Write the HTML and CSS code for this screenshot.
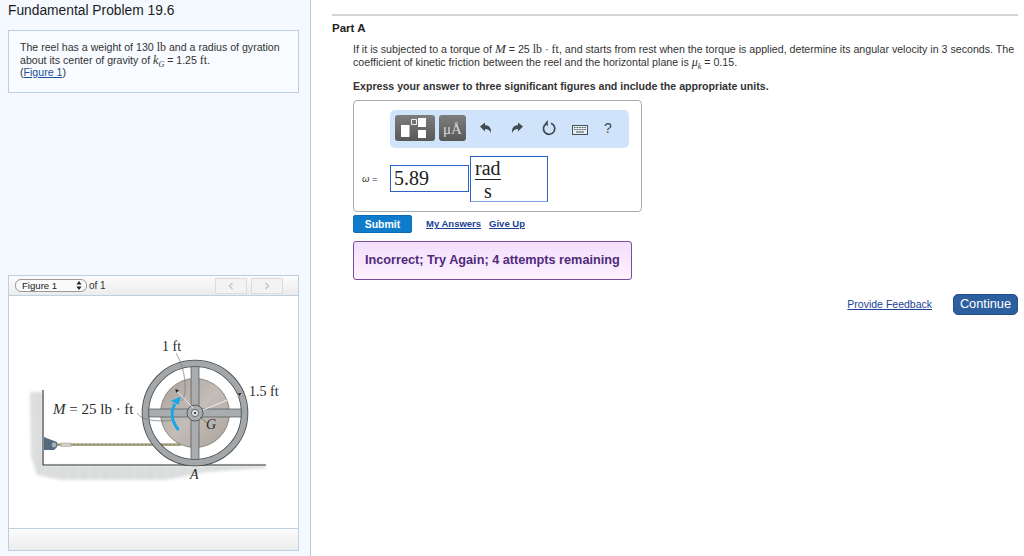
FILE: index.html
```html
<!DOCTYPE html>
<html lang="en">
<head>
<meta charset="utf-8">
<title>Fundamental Problem 19.6</title>
<link rel="stylesheet" href="styles.css">
</head>
<body>
<div class="page">
  <aside class="side">
    <h1 class="title">Fundamental Problem 19.6</h1>
    <section class="problem">
      <div>The reel has a weight of 130 <span class="m">lb</span> and a radius of gyration</div>
      <div>about its center of gravity of <span class="mi">k<sub>G</sub></span> = 1.25 <span class="m">ft</span>.</div>
      <div>(<a class="lnk" href="#">Figure 1</a>)</div>
    </section>
    <section class="figure">
      <div class="figbar">
        <div class="select"><span>Figure 1</span><svg class="updown" width="6" height="9" viewBox="0 0 6 9"><path d="M3 0l2.600 3.400H.4zM3 9L.4 5.600h5.200z" fill="#222"/></svg></div>
        <span class="of">of 1</span>
        <div class="pager">
          <div class="pg"><svg width="6" height="8" viewBox="0 0 6 8"><path d="M4.500 1L1.500 4l3 3" fill="none" stroke="#c4c4c4" stroke-width="1.400"/></svg></div>
          <div class="pg"><svg width="6" height="8" viewBox="0 0 6 8"><path d="M1.500 1l3 3-3 3" fill="none" stroke="#c4c4c4" stroke-width="1.400"/></svg></div>
        </div>
      </div>
      <div class="figpane">
        <svg class="diagram" width="288" height="232" viewBox="10 296 288 232">
          <defs>
            <filter id="soft" x="-10%" y="-10%" width="120%" height="120%"><feGaussianBlur stdDeviation="1.500"/></filter>
            <filter id="fine" x="-5%" y="-5%" width="110%" height="110%"><feGaussianBlur stdDeviation=".35"/></filter>
            <linearGradient id="drum" x1="0" y1="0" x2="1" y2="1"><stop offset="0" stop-color="#aaa29c"/><stop offset=".5" stop-color="#c4bdb7"/><stop offset="1" stop-color="#aba39c"/></linearGradient>
            <pattern id="speck" width="11" height="9" patternUnits="userSpaceOnUse"><rect width="11" height="9" fill="#dcdddd"/><circle cx="2" cy="2" r=".7" fill="#f4f4f4"/><circle cx="7" cy="5" r=".6" fill="#bcbdbe"/><circle cx="4" cy="7" r=".6" fill="#f0f0f0"/><circle cx="9.500" cy="1.500" r=".5" fill="#c2c3c4"/></pattern>
          </defs>
          <path d="M31 392h13v73h223v3l-60 4-40 8H62l-24-5-6-18z" fill="url(#speck)" filter="url(#soft)"/>
          <path d="M44 390v75h223" fill="none" stroke="#33383c" stroke-width="1.100"/>
          <g filter="url(#fine)">
            <path d="M45 437l5 2 8 3v5l-3 3h-10z" fill="#566a7d"/>
            <circle cx="55" cy="445" r="2.400" fill="#a4b0bb"/>
            <path d="M58 444.600H182" stroke="#aaa888" stroke-width="2.600"/>
            <path d="M58 444.600H182" stroke="#6f6e55" stroke-width=".6" stroke-dasharray="2 2"/>
            <rect x="62" y="443" width="10" height="3.400" fill="#d3cfc3" stroke="#888" stroke-width=".4"/>
            <circle cx="196" cy="413" r="34.500" fill="url(#drum)" stroke="#7a736d" stroke-width=".8"/>
            <path d="M192 362h8v102h-8zM146 409h100v8H146z" fill="#a9adaf" stroke="#4d5154" stroke-width=".7"/>
            <circle cx="196" cy="413" r="49.600" fill="none" stroke="#44484a" stroke-width="7.400"/>
            <circle cx="196" cy="413" r="49.600" fill="none" stroke="#a3a7a9" stroke-width="5.800"/>
            <circle cx="196" cy="413" r="8" fill="#a8acae" stroke="#44484a" stroke-width=".8"/>
            <circle cx="196" cy="413" r="3.600" fill="#dfe1e1" stroke="#44484a" stroke-width=".7"/>
            <circle cx="196" cy="413" r="1.100" fill="#222"/>
            <path d="M177 353c7 12 10 26 9 40l-3 8" fill="none" stroke="#77797a" stroke-width=".7"/>
            <path d="M176 389l18 19" stroke="#f2f2f2" stroke-width=".9"/>
            <path d="M176 389l4 1.200-2.600 2.600z" fill="#222"/>
            <path d="M204 410l39-16" stroke="#efefef" stroke-width="1"/>
            <path d="M243 393l-4 .6 1.200 2.600z" fill="#222"/>
            <path d="M138 413c3 4 7 6 13 7 7 1 13 1 21 .5" fill="none" stroke="#77797a" stroke-width=".7"/>
            <path d="M201 417l7 6" stroke="#55585a" stroke-width=".7"/>
            <path d="M179.500 430c-4-5-6.500-10-6.500-16 0-4 1-7 2.800-10" fill="none" stroke="#19a7e6" stroke-width="3"/>
            <path d="M182 396.500l-10 4.300 7.500 4.200z" fill="#19a7e6"/>
          </g>
          <text class="dg" x="163" y="351">1 ft</text>
          <text class="dg" x="250" y="396">1.5 ft</text>
          <text class="dg dgm" x="54" y="414"><tspan font-style="italic">M</tspan> = 25 lb · ft</text>
          <text class="dg" x="207" y="429" font-style="italic">G</text>
          <text class="dg" x="191" y="479" font-style="italic">A</text>
        </svg>
      </div>
      <div class="figfoot"></div>
    </section>
  </aside>

  <main class="main">
    <h2 class="part">Part A</h2>
    <div class="body">
      <p class="q">If it is subjected to a torque of <span class="mi big">M</span> = 25 <span class="m">lb</span> · <span class="m">ft</span>, and starts from rest when the torque is applied, determine its angular velocity in 3 seconds. The<br>coefficient of kinetic friction between the reel and the horizontal plane is <span class="mi">μ<sub>k</sub></span> = 0.15.</p>
      <p class="ask">Express your answer to three significant figures and include the appropriate units.</p>

      <div class="answer">
        <div class="tools">
          <div class="tbtn tpl">
            <svg width="40" height="26" viewBox="0 0 40 26"><path d="M6 10h8.500v12H6zM23 3h8v9h-8zM23 15h8v8h-8z" fill="#fff"/><path d="M16.500 4.500h5v5h-5z" fill="none" stroke="#fff" stroke-width=".9"/></svg>
          </div>
          <div class="tbtn unit">μÅ</div>
          <div class="icons">
            <svg class="ic" width="14" height="14" viewBox="0 0 14 14"><path d="M1 5.500L6 1.500v2.800c4 0 6.500 2.500 6 8-1-3-3-4.200-6-4.200v2.500z" fill="#3f4a52"/></svg>
            <svg class="ic" width="14" height="14" viewBox="0 0 14 14"><path d="M13 5.500L8 1.500v2.800c-4 0-6.500 2.500-6 8 1-3 3-4.200 6-4.200v2.500z" fill="#3f4a52"/></svg>
            <svg class="ic" width="16" height="16" viewBox="0 0 16 16"><path d="M5.200 3.700A5.700 5.700 0 1 0 10 3.200" fill="none" stroke="#3f4a52" stroke-width="1.700"/><path d="M6.800 0v6.400L4 3.300z" fill="#3f4a52"/></svg>
            <svg class="ic key" width="16" height="10" viewBox="0 0 16 10"><rect x=".5" y=".5" width="15" height="9" fill="#e6edf3" stroke="#4a5359"/><path d="M2 2.500h12M2 4.500h12" stroke="#4a5359" stroke-dasharray="1 .6"/><path d="M4 7h8" stroke="#4a5359"/></svg>
            <span class="qm">?</span>
          </div>
        </div>
        <div class="eq">
          <span class="omega"><i>ω</i> =</span>
          <div class="inp">5.89</div>
          <div class="units"><span class="frac"><span class="num">rad</span><span class="den">s</span></span></div>
        </div>
      </div>

      <div class="actions">
        <button class="submit">Submit</button>
        <a class="alnk first" href="#">My Answers</a>
        <a class="alnk" href="#">Give Up</a>
      </div>
      <div class="msg">Incorrect; Try Again; 4 attempts remaining</div>
    </div>
    <div class="nav">
      <a class="fb" href="#">Provide Feedback</a>
      <button class="cont">Continue</button>
    </div>
  </main>
</div>
</body>
</html>
```
FILE: styles.css
```css
* { box-sizing: border-box; }
html, body { margin: 0; padding: 0; height: 100%; overflow: hidden; background: #fff; }
body { font-family: "Liberation Sans", Arial, sans-serif; color: #222; }
.page { display: flex; height: 556px; }

.side { width: 311px; flex: none; background: #f4f8ff; border-right: 1px solid #b9cde0; padding: 3px 11px 0 8px; display: flex; flex-direction: column; }
.title { margin: 0; font-size: 13.800px; line-height: 15px; font-weight: 400; color: #1c1c1c; }
.problem { margin-top: 12px; height: 63px; background: #f8fbff; border: 1px solid #bdd0e2; padding: 10px 11px 0; font-size: 10.600px; line-height: 12.500px; color: #333; }
.m { font-family: "Liberation Serif", serif; font-size: 12px; }
.mi { font-family: "Liberation Serif", serif; font-style: italic; font-size: 12px; }
.mi.big { font-size: 13px; }
sub { font-size: 8px; line-height: 0; }
.lnk { color: #1d4f9c; }

.figure { margin-top: 182px; display: flex; flex-direction: column; border: 1px solid #bdd0e2; height: 276px; }
.figbar { height: 19px; flex: none; display: flex; align-items: center; padding: 0 6px; background: linear-gradient(#fbfbfb, #ececec); font-size: 10px; }
.select { width: 72px; height: 13px; display: flex; align-items: center; justify-content: space-between; padding: 0 4px 0 6px; background: #fafafa; border: 1px solid #9a9a9a; border-radius: 6px; font-size: 9.600px; color: #222; }
.of { margin-left: 2px; color: #333; }
.pager { margin-left: auto; display: flex; gap: 4px; margin-right: 9px; }
.pg { width: 32px; height: 16px; display: flex; align-items: center; justify-content: center; background: #f3f3f3; border: 1px solid #dcdcdc; }
.figpane { height: 234px; flex: none; background: #fff; border-top: 1px solid #bdd0e2; border-bottom: 1px solid #bdd0e2; overflow: hidden; }
.diagram { display: block; }
.dg { font-family: "Liberation Serif", serif; font-size: 14px; fill: #2a2a2a; }
.dgm { font-size: 15px; }
.figfoot { flex: 1; background: linear-gradient(#fcfcfc, #ededed); }

.main { flex: 1; padding: 14px 6px 0 21px; }
.part { margin: 0; padding-top: 5px; border-top: 2px solid #d4d4d4; font-size: 11.500px; line-height: 14px; font-weight: 700; color: #222; }
.body { padding-left: 21px; }
.q { margin: 8px 0 0; font-size: 10.650px; line-height: 12.500px; color: #333; white-space: nowrap; }
.ask { margin: 11.500px 0 0; font-size: 10.600px; line-height: 12px; font-weight: 700; color: #333; }

.answer { margin-top: 8px; width: 289px; height: 112px; background: #fff; border: 1px solid #ababab; border-radius: 4px; padding: 9px 12px 0 8px; }
.tools { margin-left: 28px; width: 239px; height: 38px; display: flex; align-items: flex-start; padding: 5px 0 0 5px; background: #cfe4fb; border-radius: 5px; }
.tbtn { height: 26px; border-radius: 3px; background: linear-gradient(#7d7d7d, #585858); color: #d9d9d9; flex: none; }
.tpl { width: 40px; }
.tpl svg { display: block; }
.unit { width: 27px; margin-left: 4px; font-family: "Liberation Serif", serif; font-size: 15px; line-height: 29px; text-align: center; }
.icons { display: flex; align-items: center; height: 26px; margin-left: 13px; }
.ic { flex: none; margin-right: 17px; }
.ic:nth-child(3) { margin-right: 15px; }
.ic:nth-child(4) { margin-right: 16px; }
.key { margin-top: 4px; }
.qm { font-size: 14px; color: #3f4a52; }

.eq { display: flex; align-items: center; margin-top: 8px; }
.omega { width: 28px; padding-left: 0; font-size: 9.500px; color: #333; }
.inp { width: 79px; height: 27px; border: 1px solid #2c62c8; padding-left: 3px; font-family: "Liberation Serif", serif; font-size: 20px; line-height: 25px; color: #222; }
.units { width: 78px; height: 46px; margin-left: 1px; padding: 0 0 0 4px; border: 1px solid #2c62c8; border-bottom-color: #7ea3e0; font-family: "Liberation Serif", serif; font-size: 20px; color: #222; }
.frac { display: inline-flex; flex-direction: column; align-items: center; }
.num { line-height: 22px; border-bottom: 1px solid #222; }
.den { line-height: 23px; }

.actions { display: flex; align-items: center; margin-top: 3px; height: 18px; }
.submit { width: 59px; height: 18px; padding: 0; border: 1px solid #0f6db5; border-radius: 2px; background: #0f7ccb; color: #fff; font: 700 10.500px "Liberation Sans", sans-serif; }
.alnk { font-size: 9.500px; font-weight: 700; color: #1c3f94; margin-left: 8px; }
.alnk.first { margin-left: 14px; }
.msg { margin-top: 8px; width: 279px; height: 39px; padding-left: 11px; background: linear-gradient(#f4defc, #fdf1ff); border: 1px solid #7c4c9c; border-radius: 3px; font-size: 12.700px; font-weight: 700; line-height: 37px; color: #4f2b7a; white-space: nowrap; }

.nav { display: flex; justify-content: flex-end; align-items: center; gap: 21px; margin-top: 14px; }
.fb { font-size: 10.500px; color: #1d3f96; }
.cont { width: 65px; height: 21px; padding: 0 0 1px; border: 1px solid #234f8a; border-radius: 5px; background: #2d5f9f; color: #fff; font: 400 12.800px "Liberation Sans", sans-serif; }
```
